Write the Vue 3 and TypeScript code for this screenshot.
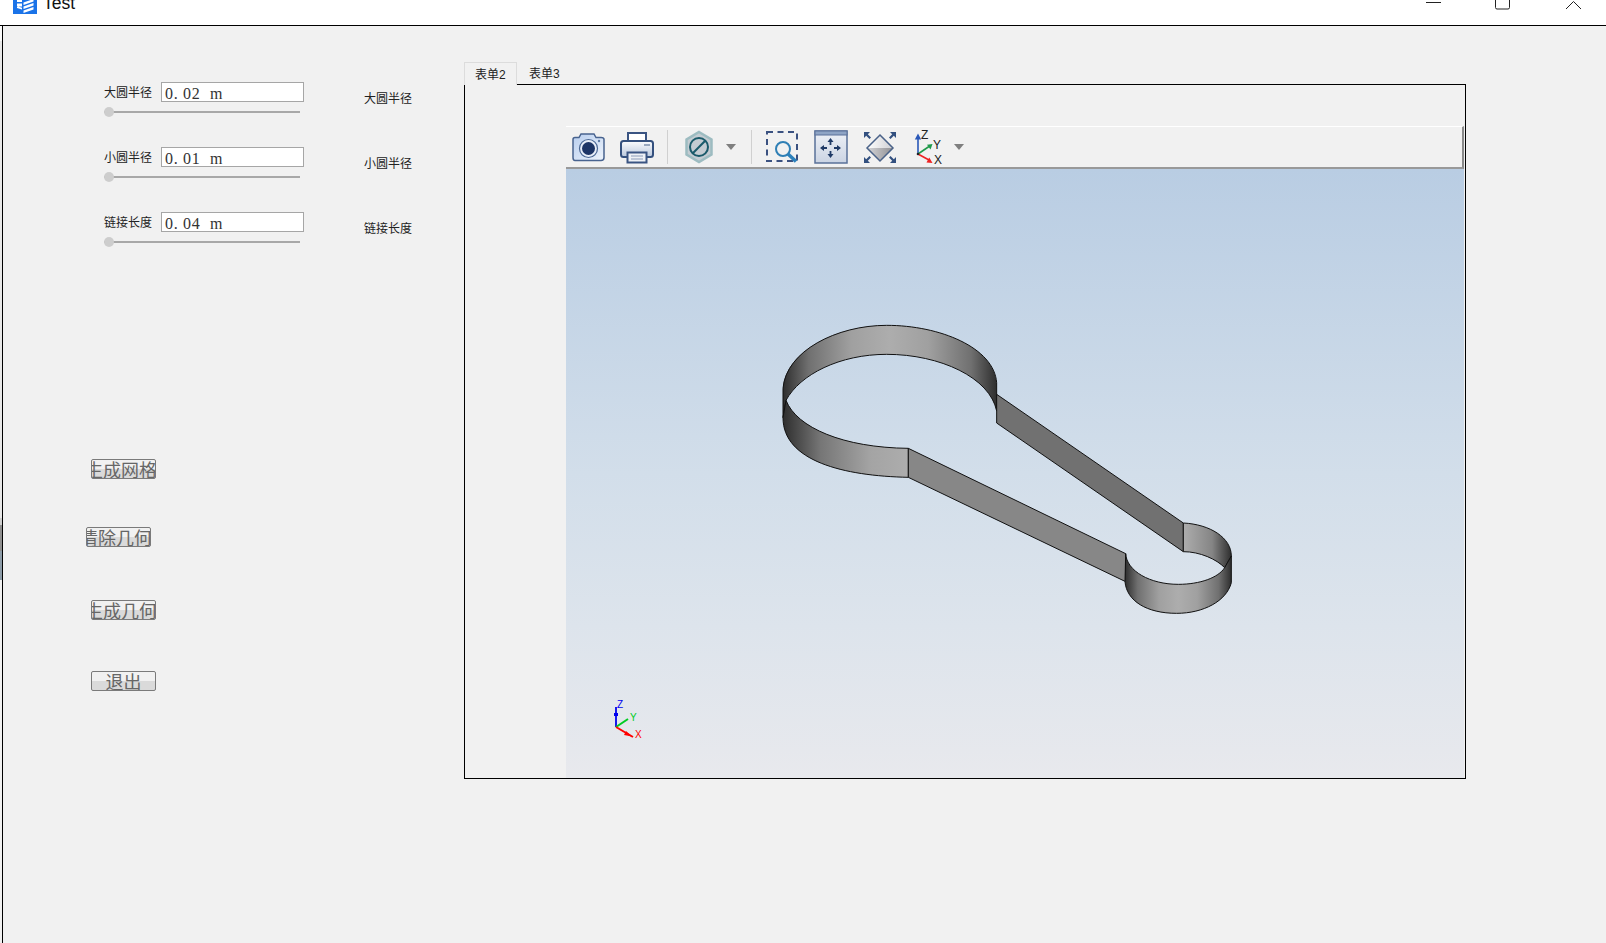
<template>
  <div class="app">
    <div class="edge"></div>
    <div class="window">
      <header class="titlebar">
        <svg class="logo" viewBox="0 0 24 24" width="24" height="24">
          <rect width="24" height="24" fill="#1a73e8" />
          <path d="M4 9h5v3H4zM4 13.500h5v3H4zM4 18l5 1.500v-1.800L4 16z" fill="#fff" />
          <path d="M10.500 12.500l10-3.500v2.500l-10 3.500zM10.500 16.500l10-3.500v2.500l-10 3.500zM10.500 20.500l10-3.500v2.500l-10 3.500z" fill="#fff" />
        </svg>
        <span class="title">Test</span>
        <svg class="controls" viewBox="0 0 170 14" width="170" height="14">
          <path d="M0 2.500h15" stroke="#222" fill="none" />
          <path d="M69.500 -4h14v11.500a1.500 1.500 0 0 1-1.500 1.500h-11a1.500 1.500 0 0 1-1.500-1.500z" stroke="#222" fill="none" />
          <path d="M140 9l7.500-7.500M155 9l-7.500-7.500" stroke="#222" fill="none" />
        </svg>
      </header>

      <main class="content">
        <section class="side">
          <div class="form">
            <div v-for="row in rows" :key="row.label" class="row">
              <div class="field">
                <div class="field-top">
                  <label class="field-label">{{ row.label }}</label>
                  <div class="input">{{ row.value }}</div>
                </div>
                <div class="slider"><span class="thumb"></span></div>
              </div>
              <span class="side-label">{{ row.label }}</span>
            </div>
          </div>
          <div class="actions">
            <button class="btn btn-mesh">生成网格</button>
            <button class="btn btn-clear">清除几何</button>
            <button class="btn btn-geom">生成几何</button>
            <button class="btn btn-quit">退出</button>
          </div>
        </section>

        <section class="tabs">
          <div class="tab-bar">
            <span class="tab active">表单2</span>
            <span class="tab">表单3</span>
          </div>
          <div class="panel">
            <div class="toolbar">
              <svg class="tool" viewBox="0 0 34 34">
                <defs>
                  <linearGradient id="camBody" x1="0" y1="0" x2="1" y2="1">
                    <stop offset="0" stop-color="#b7cdee" />
                    <stop offset="1" stop-color="#eef4fc" />
                  </linearGradient>
                </defs>
                <path d="M2 9.500q0-2 2-2h4l2-3.500h13l2 3.500h5q3 0 3 2v18q0 3-3 3H4q-2 0-2-3z" fill="url(#camBody)" stroke="#48638f" stroke-width="1.500" />
                <circle cx="17.500" cy="18.500" r="9" fill="#e8eef8" stroke="#4a6794" stroke-width="1.200" />
                <circle cx="17.500" cy="18.500" r="6.500" fill="#1d3566" />
                <circle cx="28" cy="11" r="1.200" fill="#5f7ba6" />
              </svg>

              <svg class="tool" viewBox="0 0 34 34">
                <defs>
                  <linearGradient id="prnBody" x1="0" y1="0" x2="0" y2="1">
                    <stop offset="0" stop-color="#fbfcfe" />
                    <stop offset="1" stop-color="#b9c7dc" />
                  </linearGradient>
                </defs>
                <rect x="8" y="3" width="18" height="10" fill="#fff" stroke="#3a5482" stroke-width="2" />
                <rect x="1" y="11" width="32" height="16" rx="2.500" fill="url(#prnBody)" stroke="#34507e" stroke-width="2" />
                <path d="M24 15h6" stroke="#7d8fac" stroke-width="1.500" />
                <rect x="7.500" y="22.500" width="19" height="10" fill="#eef1f6" stroke="#3a5482" stroke-width="2" />
                <path d="M11 26h12M11 29h12" stroke="#8b9cb7" stroke-width="1.200" />
              </svg>

              <span class="sep sep-a"></span>

              <svg class="tool" viewBox="0 0 34 34">
                <polygon points="16,2 28.500,9.500 28.500,24.500 16,32 3.500,24.500 3.500,9.500" fill="#c4ccd2" stroke="#9dbcc1" stroke-width="2.500" />
                <circle cx="16" cy="17" r="9" fill="none" stroke="#1a5a6a" stroke-width="2" />
                <path d="M9.800 23.200L22.200 10.800" stroke="#1a5a6a" stroke-width="2" />
              </svg>

              <svg class="caret caret-a" viewBox="0 0 10 6"><polygon points="0,0 10,0 5,6" fill="#7f7f7f" /></svg>

              <span class="sep"></span>

              <svg class="tool tool-box" viewBox="0 0 34 34">
                <rect x="2" y="2" width="30" height="29" fill="none" stroke="#3a5180" stroke-width="2" stroke-dasharray="6 4.500" />
                <circle cx="18" cy="19" r="7" fill="none" stroke="#2f7fb5" stroke-width="2" />
                <path d="M23 24l8 7.500" stroke="#2b80bb" stroke-width="3.500" />
              </svg>

              <svg class="tool" viewBox="0 0 34 34">
                <defs>
                  <linearGradient id="panBody" x1="0" y1="0" x2="0" y2="1">
                    <stop offset="0" stop-color="#eef1f7" />
                    <stop offset="1" stop-color="#cbd4e3" />
                  </linearGradient>
                </defs>
                <rect x="1" y="1" width="32" height="32" fill="url(#panBody)" stroke="#5a7199" stroke-width="1.500" />
                <rect x="1" y="1" width="32" height="4" fill="#8ea4c5" stroke="#5a7199" />
                <path d="M16.500 11v4M16.500 21v4M9 18h4M20 18h4" stroke="#1f3a66" stroke-width="1.800" />
                <path d="M16.500 8l3 4h-6zM16.500 28l3-4h-6zM6 18l4-3v6zM27 18l-4-3v6z" fill="#1f3a66" />
              </svg>

              <svg class="tool" viewBox="0 0 34 34">
                <defs>
                  <linearGradient id="fitTop" x1="0" y1="0" x2="1" y2="0">
                    <stop offset="0" stop-color="#ffffff" />
                    <stop offset="1" stop-color="#cfcfd3" />
                  </linearGradient>
                  <linearGradient id="fitLow" x1="0" y1="0" x2="1" y2="0">
                    <stop offset="0" stop-color="#d6d6d9" />
                    <stop offset="1" stop-color="#8f8f93" />
                  </linearGradient>
                </defs>
                <polygon points="17,5 30,18 4,18" fill="url(#fitTop)" />
                <polygon points="4,18 30,18 17,31" fill="url(#fitLow)" />
                <polygon points="17,5 30,18 17,31 4,18" fill="none" stroke="#4a6288" stroke-width="1.500" />
                <path d="M1 2h6L4.800 4.200 8 7.500 6.500 9 3.200 5.800 1 8zM33 2h-6l2.200 2.200L26 7.500 27.500 9l3.300-3.200L33 8zM1 33h6l-2.200-2.200L8 27.500 6.500 26l-3.300 3.200L1 27zM33 33h-6l2.200-2.200L26 27.500l1.500-1.500 3.300 3.200L33 27z" fill="#33507f" />
              </svg>

              <svg class="tool tool-triad" viewBox="0 0 34 34">
                <path d="M6 24V8" stroke="#2a58b8" stroke-width="1.600" />
                <path d="M6 3.500l3.200 6h-6.400z" fill="#2a58b8" />
                <path d="M6 24l11-7.500" stroke="#1f9a4a" stroke-width="1.600" />
                <path d="M20.500 14l-2 5.500-3.500-4.800z" fill="#1f9a4a" />
                <path d="M6 24l11 6" stroke="#ee2222" stroke-width="1.600" />
                <path d="M20.500 33l-6-.5 2.800-5z" fill="#ee2222" />
                <circle cx="6" cy="24" r="1.300" fill="#222" />
                <text x="9" y="9" class="triad-text">Z</text>
                <text x="21" y="19" class="triad-text">Y</text>
                <text x="22" y="34" class="triad-text">X</text>
              </svg>

              <svg class="caret caret-b" viewBox="0 0 10 6"><polygon points="0,0 10,0 5,6" fill="#7f7f7f" /></svg>
            </div>

            <div class="viewer">
              <svg class="model" viewBox="0 0 1500 930">
                <defs>
                  <linearGradient id="wallRound">
                    <stop offset="0" stop-color="#2e2e2e" />
                    <stop offset="0.12" stop-color="#707070" />
                    <stop offset="0.32" stop-color="#a0a0a0" />
                    <stop offset="0.5" stop-color="#adadad" />
                    <stop offset="0.68" stop-color="#a0a0a0" />
                    <stop offset="0.88" stop-color="#707070" />
                    <stop offset="1" stop-color="#2e2e2e" />
                  </linearGradient>
                  <linearGradient id="wallUp">
                    <stop offset="0" stop-color="#2e2e2e" />
                    <stop offset="0.3" stop-color="#767676" />
                    <stop offset="0.7" stop-color="#a4a4a4" />
                    <stop offset="1" stop-color="#adadad" />
                  </linearGradient>
                  <linearGradient id="wallDown">
                    <stop offset="0" stop-color="#adadad" />
                    <stop offset="0.6" stop-color="#858585" />
                    <stop offset="1" stop-color="#2e2e2e" />
                  </linearGradient>
                </defs>
                <g stroke="#111" stroke-width="3" stroke-linejoin="round">
                  <path d="M69 232C78 120 230 43 380 43C540 43 702 110 710 215V300C690 200 540 130 380 130C240 130 120 190 78 268L69 320Z" fill="url(#wallRound)" />
                  <path d="M710 250L1270 636V722L710 336Z" fill="#717171" />
                  <path d="M78 268C110 350 250 410 445 412V499C250 495 69 450 69 320Z" fill="url(#wallUp)" />
                  <path d="M445 412L1097 728V812L445 499Z" fill="#878787" />
                  <path d="M1270 636C1350 640 1414 680 1414 735L1394 770C1370 745 1320 722 1270 722Z" fill="url(#wallDown)" />
                  <path d="M1097 728C1100 780 1170 820 1255 820C1320 820 1375 800 1394 770L1414 735V815C1400 870 1330 907 1250 907C1160 907 1100 870 1095 812Z" fill="url(#wallRound)" />
                </g>
              </svg>
              <svg class="axes" viewBox="0 0 40 40">
                <path d="M6 25V5" stroke="#0000ee" stroke-width="1.800" />
                <path d="M4 11h4v3h-4z" fill="#0000ee" />
                <path d="M6 25L18 17" stroke="#00cc22" stroke-width="2" />
                <path d="M6 25L23 35" stroke="#ff0000" stroke-width="2" />
                <path d="M16 29l6 5.500-8-1.500z" fill="#ff0000" />
                <text x="7" y="6" class="axis-text axis-z">Z</text>
                <text x="20" y="19" class="axis-text axis-y">Y</text>
                <text x="25" y="36" class="axis-text axis-x">X</text>
              </svg>
            </div>
          </div>
        </section>
      </main>
    </div>
  </div>
</template>

<script setup lang="ts">
interface Row {
  label: string
  value: string
}

const rows: Row[] = [
  { label: '大圆半径', value: '0. 02  m' },
  { label: '小圆半径', value: '0. 01  m' },
  { label: '链接长度', value: '0. 04  m' },
]
</script>

<style>
html,
body {
  margin: 0;
  overflow: hidden;
  background: #f1f1f1;
}
</style>

<style scoped>
.app {
  display: flex;
  width: 1606px;
  height: 943px;
  font-family: "Liberation Sans", "Noto Sans CJK SC", sans-serif;
  font-size: 12px;
  color: #222;
  overflow: hidden;
}

.edge {
  width: 2px;
  flex: none;
  background: linear-gradient(
    to bottom,
    #c6c6c6 0 25px,
    #fafafa 25px 41px,
    #e8e8e8 41px 518px,
    #cfcfcf 518px 525px,
    #8f8f8f 525px 551px,
    #8d9ca8 551px 580px,
    #f1f1f1 580px
  );
}

.window {
  flex: 1;
  display: flex;
  flex-direction: column;
  min-width: 0;
}

.titlebar {
  height: 25px;
  flex: none;
  display: flex;
  align-items: flex-start;
  background: #fff;
  border-bottom: 1px solid #000;
  margin-left: -2px;
  overflow: hidden;
}

.logo {
  margin: -10px 0 0 13px;
  flex: none;
}

.title {
  margin: -8px 0 0 6px;
  font-size: 17.5px;
  line-height: 22px;
  color: #111;
}

.controls {
  margin: 0 10px 0 auto;
  overflow: visible;
  flex: none;
}

.content {
  flex: 1;
  display: flex;
  background: #f1f1f1;
  border-left: 1px solid #000;
  min-height: 0;
}

.side {
  width: 461px;
  flex: none;
}

.form {
  padding: 56px 0 0 101px;
  display: flex;
  flex-direction: column;
  gap: 30px;
}

.row {
  display: flex;
  gap: 60px;
}

.field {
  width: 200px;
}

.field-top {
  display: flex;
  align-items: center;
  justify-content: space-between;
}

.field-label {
  line-height: 18px;
  margin-top: 2px;
  white-space: nowrap;
}

.input {
  box-sizing: border-box;
  width: 143px;
  height: 20px;
  padding-left: 3px;
  background: #fff;
  border: 1px solid #a6a6a6;
  font-family: "Liberation Serif", serif;
  font-size: 16px;
  letter-spacing: 0.7px;
  line-height: 21px;
  color: #333;
  white-space: pre;
}

.slider {
  position: relative;
  width: 196px;
  height: 10px;
  margin-top: 5px;
}

.slider::before {
  content: "";
  display: block;
  position: absolute;
  left: 0;
  right: 0;
  top: 4px;
  height: 2px;
  background: #a8a8a8;
}

.thumb {
  position: absolute;
  left: 0;
  top: 0;
  width: 10px;
  height: 10px;
  border-radius: 50%;
  background: #cdcdcd;
}

.side-label {
  margin-top: 8px;
  line-height: 18px;
  white-space: nowrap;
}

.actions {
  display: flex;
  flex-direction: column;
  align-items: flex-start;
}

.btn {
  box-sizing: border-box;
  width: 65px;
  height: 20px;
  padding: 0 5px 0 0;
  display: flex;
  justify-content: center;
  align-items: center;
  overflow: hidden;
  white-space: nowrap;
  font-family: "Noto Sans CJK SC", sans-serif;
  font-size: 18px;
  line-height: 18px;
  color: #666;
  border: 1px solid #7a7a7a;
  border-radius: 2px;
  background: linear-gradient(to bottom, #f1f1f1 0 50%, #dadada 50% 100%);
}

.btn-mesh {
  margin: 212px 0 0 88px;
}

.btn-clear {
  margin: 48px 0 0 83px;
}

.btn-geom {
  margin: 53px 0 0 88px;
}

.btn-quit {
  margin: 51px 0 0 88px;
  padding-right: 0;
}

.tabs {
  width: 1002px;
  flex: none;
  padding-top: 36px;
}

.tab-bar {
  display: flex;
  height: 22px;
  position: relative;
  z-index: 1;
}

.tab {
  box-sizing: border-box;
  height: 23px;
  line-height: 24px;
  padding: 0 12px;
}

.tab.active {
  background: #f1f1f1;
  border: 1px solid #dcdcdc;
  border-bottom: none;
  padding: 0 10px;
  width: 53px;
}

.panel {
  box-sizing: border-box;
  height: 695px;
  display: flex;
  flex-direction: column;
  padding: 41px 1px 0 101px;
  background: #f1f1f1;
  border: 1px solid #000;
}

.toolbar {
  box-sizing: border-box;
  height: 43px;
  flex: none;
  display: flex;
  align-items: center;
  gap: 15px;
  padding-left: 5px;
  background: #f1f1f1;
  border-top: 1px solid #fff;
  border-bottom: 2px solid #999;
  border-right: 2px solid #8a8a8a;
}

.tool {
  width: 34px;
  height: 34px;
  flex: none;
  overflow: visible;
}

.tool-box {
  margin-left: -2px;
}

.triad-text {
  font-size: 12px;
  fill: #222;
}

.sep {
  width: 1px;
  height: 34px;
  background: #d0d0d0;
  flex: none;
}

.sep-a {
  margin-left: -2px;
}

.caret {
  width: 10px;
  height: 6px;
  flex: none;
}

.caret-a {
  margin-left: -6px;
}

.caret-b {
  margin-left: -7px;
}

.viewer {
  position: relative;
  flex: 1;
  background: linear-gradient(to bottom, #b9cde3 0%, #d2deea 50%, #dde4ec 75%, #e8e9ed 100%);
}

.model {
  position: absolute;
  left: 194px;
  top: 142px;
  width: 500px;
  height: 310px;
}

.axes {
  position: absolute;
  left: 44px;
  top: 533px;
  width: 40px;
  height: 40px;
  overflow: visible;
}

.axis-text {
  font-size: 10px;
}

.axis-z {
  fill: #0000ee;
}

.axis-y {
  fill: #00cc22;
}

.axis-x {
  fill: #ff0000;
}
</style>
